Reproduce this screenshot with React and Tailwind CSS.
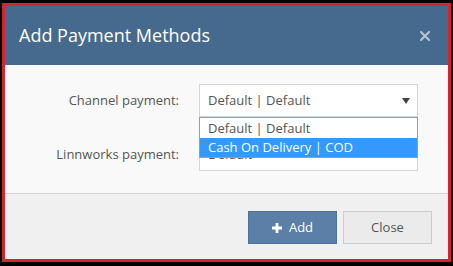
import { X } from "lucide-react";

const font = { fontFamily: '"Open Sans", "Liberation Sans", sans-serif' };

function Field({ label, value, children }) {
  return (
    <div className="flex items-center">
      <div className="w-[175px] shrink-0 pr-[1px] text-right text-[13px] text-[#555]">{label}</div>
      <div className="relative ml-[19px] w-[219px]">
        <div className="flex h-[33px] items-center justify-between border border-[#d5d5d5] bg-white pl-[8px] pr-[6px] text-[13px] text-[#555]">
          <span>{value}</span>
          <svg width="8" height="6" viewBox="0 0 8 6" className="mr-[1px]">
            <path d="M0 0h8L4 6z" fill="#444" />
          </svg>
        </div>
        {children}
      </div>
    </div>
  );
}

export default function App() {
  return (
    <div className="h-[266px] w-[453px] bg-black pb-[4px] pl-[2px] pr-[2px] pt-[3px]" style={font}>
      <div className="flex h-full flex-col border-[3px] border-[#d6232f] bg-[#f9f9f9]">
        <div className="flex h-[59px] shrink-0 items-center justify-between bg-[#466a8e] pl-[14px] pr-[15px]">
          <span className="text-[18px] text-white">Add Payment Methods</span>
          <X className="h-[16px] w-[16px] text-[#b6c3d1]" strokeWidth={3.2} />
        </div>

        <div className="flex flex-1 flex-col gap-[21px] pt-[19px]">
          <Field label="Channel payment:" value="Default | Default">
            <div className="absolute left-0 top-[33px] z-10 w-full border border-[#8aa0b8] bg-white text-[13px] text-[#555]">
              <div className="h-[20px] pl-[8px] leading-[20px]">Default | Default</div>
              <div className="h-[19px] bg-[#3399ff] pl-[8px] leading-[19px] text-white">Cash On Delivery | COD</div>
            </div>
          </Field>
          <Field label="Linnworks payment:" value="Default" />
        </div>

        <div className="flex h-[66px] shrink-0 items-start justify-end gap-[6px] border-t border-[#d2d2d2] bg-[#f0f0f0] pr-[16px] pt-[17px]">
          <button className="flex h-[33px] w-[89px] items-center justify-center gap-[7px] border border-[#4e7298] bg-[#5b7fa7] text-[13px] text-white">
            <svg width="10" height="10" viewBox="0 0 10 10">
              <path d="M3.6 0h2.8v3.6H10v2.8H6.4V10H3.6V6.4H0V3.6h3.6z" fill="#fff" />
            </svg>
            Add
          </button>
          <button className="h-[33px] w-[89px] border border-[#cccccc] bg-[#ebebeb] text-[13px] text-[#555]">
            Close
          </button>
        </div>
      </div>
    </div>
  );
}
